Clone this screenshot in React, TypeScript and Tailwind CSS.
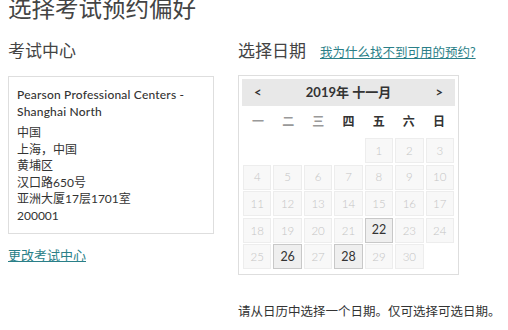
import React from "react";

const font = { fontFamily: "Lato, 'Noto Sans CJK SC', sans-serif" };

const available = [22, 26, 28];

function Calendar() {
  const days = ["一", "二", "三", "四", "五", "六", "日"];
  // November 2019 starts on Friday
  const cells: (number | null)[] = [null, null, null, null];
  for (let d = 1; d <= 30; d++) cells.push(d);

  return (
    <div className="w-[221px] border border-[#dedede] p-[3px] pb-[5px]">
      <div className="flex h-[27px] items-center justify-between bg-[#e8e8e8] px-[12px] text-[13px] font-bold text-[#333]">
        <span>&lt;</span>
        <span>2019年 十一月</span>
        <span>&gt;</span>
      </div>
      <div className="grid h-[32px] grid-cols-7 items-center px-[1px] text-center text-[12px] font-bold">
        {days.map((d, i) => (
          <span key={d} className={i < 3 ? "text-[#999]" : "text-[#333]"}>
            {d}
          </span>
        ))}
      </div>
      <div className="grid grid-cols-7 gap-x-[2px] gap-y-[1.6px] px-[1px]">
        {cells.map((d, i) =>
          d === null ? (
            <div key={"e" + i} className="h-[25px]" />
          ) : available.includes(d) ? (
            <div
              key={d}
              className="flex h-[25px] items-center justify-center border border-[#c8c8c8] bg-[#efefef] text-[12.5px] text-[#333]"
            >
              {d}
            </div>
          ) : (
            <div
              key={d}
              className="flex h-[25px] items-center justify-center border border-[#ededed] bg-[#f8f8f8] text-[11.5px] font-light text-[#c4c4c4]"
            >
              {d}
            </div>
          )
        )}
      </div>
    </div>
  );
}

export default function App() {
  return (
    <div className="h-[330px] w-[508px] overflow-hidden bg-white text-[#333]" style={font}>
      <h1 className="ml-[8px] mt-[-7px] text-[23.5px] leading-[30px] text-[#444]">
        选择考试预约偏好
      </h1>
      <div className="mt-[15px] flex pl-[8px]">
        {/* Left column */}
        <div className="w-[206px]">
          <h2 className="h-[32px] text-[17px] leading-[26px] text-[#444]">考试中心</h2>
          <div className="mt-[6px] h-[158px] border border-[#dedede] px-[8px] pt-[9px] text-[12px]">
            <p className="font-medium leading-[17px] tracking-[0.2px] text-[#333]">
              Pearson Professional Centers - Shanghai North
            </p>
            <div className="mt-[5px] leading-[16.5px] text-[#333]">
              <p>中国</p>
              <p>上海，中国</p>
              <p>黄埔区</p>
              <p>汉口路650号</p>
              <p>亚洲大厦17层1701室</p>
              <p>200001</p>
            </div>
          </div>
          <a href="#" className="mt-[12px] block text-[13px] text-[#2a7f88] underline">
            更改考试中心
          </a>
        </div>

        {/* Right column */}
        <div className="ml-[24px]">
          <div className="flex h-[32px] items-baseline">
            <h2 className="text-[17px] leading-[26px] text-[#444]">选择日期</h2>
            <a href="#" className="ml-[14px] text-[12.5px] text-[#2a7f88] underline">
              我为什么找不到可用的预约?
            </a>
          </div>
          <div className="mt-[5px]">
            <Calendar />
          </div>
          <p className="mt-[28px] text-[12.5px] text-[#333]">
            请从日历中选择一个日期。仅可选择可选日期。
          </p>
        </div>
      </div>
    </div>
  );
}
